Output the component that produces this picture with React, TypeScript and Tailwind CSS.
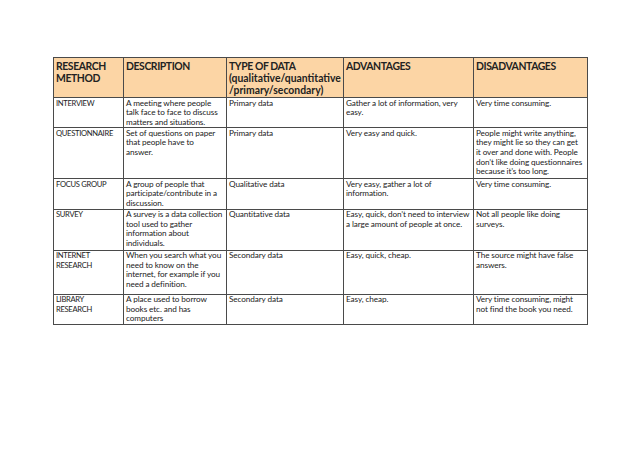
import React from "react";

type Row = { h: number; cells: string[][] };

const rows: Row[] = [
  {
    h: 30,
    cells: [
      ["INTERVIEW"],
      ["A meeting where people", "talk face to face to discuss", "matters and situations."],
      ["Primary data"],
      ["Gather a lot of information, very", "easy."],
      ["Very time consuming."],
    ],
  },
  {
    h: 51,
    cells: [
      ["QUESTIONNAIRE"],
      ["Set of questions on paper", "that people have to", "answer."],
      ["Primary data"],
      ["Very easy and quick."],
      [
        "People might write anything,",
        "they might lie so they can get",
        "it over and done with. People",
        "don\u2019t like doing questionnaires",
        "because it\u2019s too long.",
      ],
    ],
  },
  {
    h: 30,
    cells: [
      ["FOCUS GROUP"],
      ["A group of people that", "participate/contribute in a", "discussion."],
      ["Qualitative data"],
      ["Very easy, gather a lot of", "information."],
      ["Very time consuming."],
    ],
  },
  {
    h: 41,
    cells: [
      ["SURVEY"],
      ["A survey is a data collection", "tool used to gather", "information about", "individuals."],
      ["Quantitative data"],
      ["Easy, quick, don\u2019t need to interview", "a large amount of people at once."],
      ["Not all people like doing", "surveys."],
    ],
  },
  {
    h: 44,
    cells: [
      ["INTERNET", "RESEARCH"],
      ["When you search what you", "need to know on the", "internet, for example if you", "need a definition."],
      ["Secondary data"],
      ["Easy, quick, cheap."],
      ["The source might have false", "answers."],
    ],
  },
  {
    h: 30,
    cells: [
      ["LIBRARY", "RESEARCH"],
      ["A place used to borrow", "books etc. and has", "computers"],
      ["Secondary data"],
      ["Easy, cheap."],
      ["Very time consuming, might", "not find the book you need."],
    ],
  },
];

type HLine = { t: string; lower?: boolean };
const headers: HLine[][] = [
  [{ t: "RESEARCH" }, { t: "METHOD" }],
  [{ t: "DESCRIPTION" }],
  [
    { t: "TYPE OF DATA" },
    { t: "(qualitative/quantitative", lower: true },
    { t: "/primary/secondary)", lower: true },
  ],
  [{ t: "ADVANTAGES" }],
  [{ t: "DISADVANTAGES" }],
];

const widths = ["w-[70px]", "w-[103px]", "w-[117px]", "w-[130px]", "w-[114px]"];

export default function App() {
  return (
    <div
      className="min-h-screen w-full bg-white pl-[53px] pt-[57px]"
      style={{ fontFamily: "Lato, 'Open Sans', sans-serif" }}
    >
      <table className="table-fixed border-collapse w-[535px] text-[#222]">
        <colgroup>
          {widths.map((w, i) => (
            <col key={i} className={w} />
          ))}
        </colgroup>
        <thead>
          <tr className="h-[40px] bg-[#fcd5a5]">
            {headers.map((h, i) => (
              <th
                key={i}
                className="border border-[#4a4a4a] align-top text-left font-bold text-[10.4px] leading-[12.4px] px-[2px] pt-[1.5px]"
              >
                {h.map((l, k) => (
                  <div
                    key={k}
                    className={
                      l.lower
                        ? "whitespace-nowrap tracking-[0px]"
                        : "whitespace-nowrap tracking-[-0.4px]"
                    }
                  >
                    {l.t}
                  </div>
                ))}
              </th>
            ))}
          </tr>
        </thead>
        <tbody>
          {rows.map((r, i) => (
            <tr key={i} style={{ height: r.h }}>
              {r.cells.map((c, j) => (
                <td
                  key={j}
                  className={
                    j === 0
                      ? "border border-[#4a4a4a] align-top text-left text-[7.6px] leading-[9.6px] px-[2px] pt-[0.5px] tracking-[-0.3px]"
                      : "border border-[#4a4a4a] align-top text-left text-[8.2px] leading-[9.6px] px-[2px] pt-[0.5px] tracking-[-0.1px]"
                  }
                >
                  {c.map((l, k) => (
                    <div key={k} className="whitespace-nowrap">
                      {l}
                    </div>
                  ))}
                </td>
              ))}
            </tr>
          ))}
        </tbody>
      </table>
    </div>
  );
}
